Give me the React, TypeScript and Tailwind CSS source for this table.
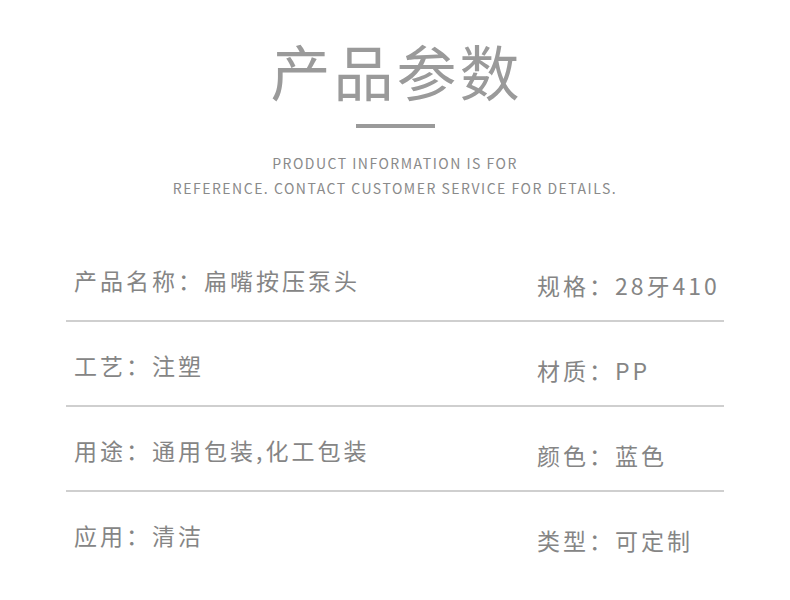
import React from 'react';

const rows: [string, string][] = [
  ['产品名称：扁嘴按压泵头', '规格：28牙410'],
  ['工艺：注塑', '材质：PP'],
  ['用途：通用包装,化工包装', '颜色：蓝色'],
  ['应用：清洁', '类型：可定制'],
];

const cjk = { fontFamily: '"Noto Sans CJK SC", "Noto Sans", sans-serif' };

export default function App() {
  return (
    <div className="w-[790px] h-[600px] bg-white overflow-hidden" style={cjk}>
      <div className="flex flex-col items-center pt-[40px]">
        <h1 className="text-[60px] leading-[60px] font-normal tracking-[3px] pl-[3px] text-[#9a9a9a]">
          产品参数
        </h1>
        <div className="mt-[24px] w-[79px] h-[4px] bg-[#9a9a9a]" />
        <div className="mt-[23px] text-center text-[14px] leading-[25px] tracking-[1.5px] text-[#8a8a8a]">
          <p>PRODUCT INFORMATION IS FOR</p>
          <p>REFERENCE. CONTACT CUSTOMER SERVICE FOR DETAILS.</p>
        </div>
      </div>

      <div className="mt-[36px] ml-[66px] w-[658px]">
        {rows.map(([left, right], i) => (
          <div
            key={i}
            className={`flex h-[85px] text-[23px] leading-[30px] tracking-[3px] text-[#858585] ${
              i < rows.length - 1 ? 'border-b-2 border-[#cfcfcf]' : ''
            }`}
          >
            <div className="w-[471px] pl-[8px] pt-[28px]">{left}</div>
            <div className="pt-[33px]">{right}</div>
          </div>
        ))}
      </div>
    </div>
  );
}
